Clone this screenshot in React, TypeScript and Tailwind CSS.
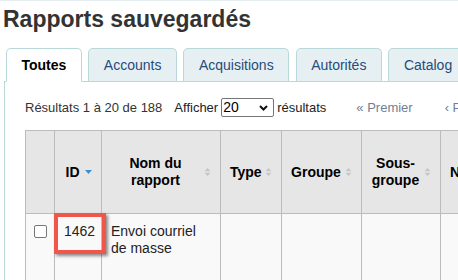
import React from "react";

const tabs = ["Toutes", "Accounts", "Acquisitions", "Autorités", "Catalog"];

function SortBoth() {
  return (
    <svg width="7" height="9" viewBox="0 0 7 9" className="absolute right-[9px] top-1/2 -translate-y-1/2">
      <path d="M3.5 0.5 L6.5 3.8 L0.5 3.8 Z" fill="#c6c6c6" />
      <path d="M3.5 8.5 L6.5 5.2 L0.5 5.2 Z" fill="#c6c6c6" />
    </svg>
  );
}

function SortDesc() {
  return (
    <svg width="7" height="4" viewBox="0 0 7 4" className="absolute right-[9px] top-[39px]">
      <path d="M0 0 L7 0 L3.5 4 Z" fill="#3a8ed4" />
    </svg>
  );
}

export default function App() {
  return (
    <div className="w-[458px] h-[280px] overflow-hidden bg-white border-t border-[#e4eef1] font-['Liberation_Sans',Arial,sans-serif] text-[#333]">
      <h1 className="mt-[5px] ml-[3px] text-[23px] leading-[26px] font-bold text-[#333]">
        Rapports sauvegardés
      </h1>

      <div className="ml-[4px] mt-[16px]">
        <ul className="flex flex-nowrap gap-[6.5px] pl-[2px] border-b border-[#b9d8d9]">
          {tabs.map((t, i) =>
            i === 0 ? (
              <li
                key={t}
                className="shrink-0 -mb-px h-[34px] px-[14.5px] pt-[8px] text-[14px] leading-[17px] font-bold text-black bg-white border border-[#b9d8d9] border-b-white rounded-t-[5px]"
              >
                {t}
              </li>
            ) : (
              <li
                key={t}
                className="shrink-0 h-[33px] px-[14.5px] pt-[8px] text-[14px] leading-[17px] text-[#274b7c] bg-[#e6f0f2] border border-b-0 border-[#b9d8d9] rounded-t-[5px]"
              >
                {t}
              </li>
            )
          )}
        </ul>

        <div className="border-l border-[#b9d8d9] pl-[20px] pt-[16px] h-[200px]">
          <div className="flex items-center h-[19px] text-[13px] whitespace-nowrap">
            <span className="shrink-0 text-[#333]">Résultats 1 à 20 de 188</span>
            <span className="shrink-0 ml-[12px] text-[#222]">Afficher</span>
            <div className="shrink-0 ml-[3px] flex items-center justify-between w-[53px] h-[19px] border border-[#767676] rounded-[2px] pl-[1px] pr-[5px] text-[14px] text-black">
              <span>20</span>
              <svg width="9" height="6" viewBox="0 0 9 6">
                <path d="M1 1 L4.5 4.5 L8 1" fill="none" stroke="#111" strokeWidth="2" />
              </svg>
            </div>
            <span className="shrink-0 ml-[3px] text-[#222]">résultats</span>
            <span className="shrink-0 ml-[30px] text-[#6f8096]">« Premier</span>
            <span className="shrink-0 ml-[32px] text-[#6f8096]">‹ Précédent</span>
          </div>

          <table className="mt-[13px] table-fixed border-collapse w-[530px] text-[14px] leading-[17px]">
            <colgroup>
              <col className="w-[29px]" />
              <col className="w-[47px]" />
              <col className="w-[119px]" />
              <col className="w-[61px]" />
              <col className="w-[80px]" />
              <col className="w-[79px]" />
              <col className="w-[115px]" />
            </colgroup>
            <thead>
              <tr className="h-[83px] bg-[#e6e6e6] text-black font-bold">
                <th className="border border-[#bcbcbc]"></th>
                <th className="relative border border-[#bcbcbc] pl-[9px] pr-[20px] text-center align-middle">
                  ID
                  <SortDesc />
                </th>
                <th className="relative border border-[#bcbcbc] pl-[9px] pr-[20px] text-center align-middle">
                  Nom du rapport
                  <SortBoth />
                </th>
                <th className="relative border border-[#bcbcbc] pl-[9px] pr-[20px] text-center align-middle whitespace-nowrap">
                  Type
                  <SortBoth />
                </th>
                <th className="relative border border-[#bcbcbc] pl-[9px] pr-[20px] text-center align-middle">
                  Groupe
                  <SortBoth />
                </th>
                <th className="relative border border-[#bcbcbc] pl-[9px] pr-[20px] text-center align-middle">
                  Sous-
                  <br />
                  groupe
                  <SortBoth />
                </th>
                <th className="relative border border-[#bcbcbc] pl-[9px] pr-[20px] text-left align-middle">
                  Notes
                  <SortBoth />
                </th>
              </tr>
            </thead>
            <tbody>
              <tr className="h-[80px] bg-[#f9f9f9] text-[#222] align-top">
                <td className="border border-[#bcbcbc] pt-[11px]">
                  <div className="mx-auto w-[13px] h-[13px] rounded-[2px] border border-[#767676] bg-white" />
                </td>
                <td className="relative border border-[#bcbcbc] pl-[9px] pt-[9px]">
                  1462
                  <div className="absolute left-[-1px] top-[-1px] w-[52px] h-[41px] border-4 border-[#f0564a] shadow-[2px_2px_3px_rgba(0,0,0,0.45)]" />
                </td>
                <td className="border border-[#bcbcbc] pl-[9px] pr-[9px] pt-[9px]">
                  Envoi courriel de masse
                </td>
                <td className="border border-[#bcbcbc]"></td>
                <td className="border border-[#bcbcbc]"></td>
                <td className="border border-[#bcbcbc]"></td>
                <td className="border border-[#bcbcbc]"></td>
              </tr>
            </tbody>
          </table>
        </div>
      </div>
    </div>
  );
}
